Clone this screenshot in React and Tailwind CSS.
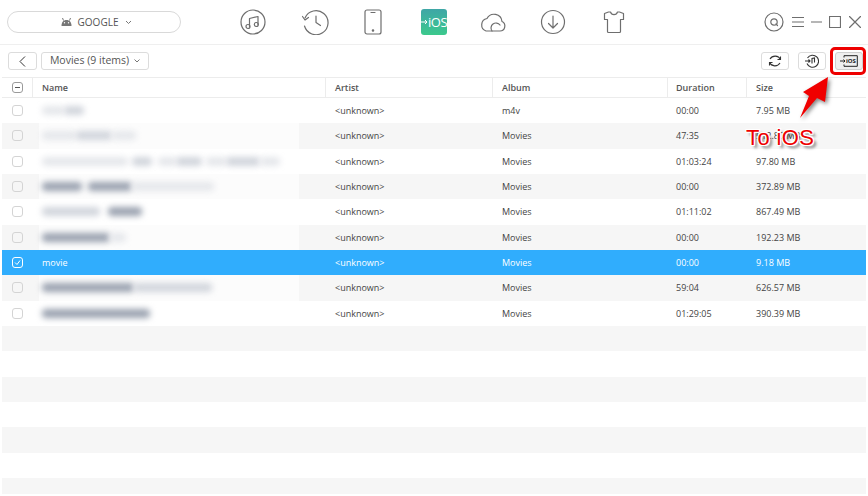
import React from "react";

const rows = [
  { a: "m4v", d: "00:00", s: "7.95 MB", blur: [[0, 22, "bg-gray-200"], [22, 20, "bg-gray-300"]] },
  { a: "Movies", d: "47:35", s: "512.80 MB", blur: [[0, 34, "bg-gray-200"], [34, 36, "bg-gray-300"], [70, 24, "bg-gray-200"]] },
  { a: "Movies", d: "01:03:24", s: "97.80 MB", blur: [[0, 86, "bg-gray-200"], [90, 20, "bg-gray-300"], [116, 18, "bg-gray-200"], [134, 26, "bg-gray-300"], [164, 20, "bg-gray-200"], [184, 34, "bg-gray-300"], [218, 20, "bg-gray-200"]] },
  { a: "Movies", d: "00:00", s: "372.89 MB", blur: [[0, 40, "bg-gray-400"], [46, 44, "bg-gray-400"], [90, 82, "bg-gray-200"]] },
  { a: "Movies", d: "01:11:02", s: "867.49 MB", blur: [[0, 58, "bg-gray-300"], [66, 34, "bg-gray-400"]] },
  { a: "Movies", d: "00:00", s: "192.23 MB", blur: [[0, 68, "bg-gray-400"], [68, 16, "bg-gray-200"]] },
  { a: "Movies", d: "00:00", s: "9.18 MB", name: "movie" },
  { a: "Movies", d: "59:04", s: "626.57 MB", blur: [[0, 92, "bg-gray-400"], [92, 78, "bg-gray-300"]] },
  { a: "Movies", d: "01:29:05", s: "390.39 MB", blur: [[0, 108, "bg-gray-400"]] },
];

const Box = ({ checked, minus }) => (
  <span className={`flex h-[11px] w-[11px] items-center justify-center rounded-[3px] border ${checked ? "border-white" : minus ? "border-[#9a9a9a]" : "border-[#d4d4d4]"}`}>
    {minus && <span className="h-px w-[5px] bg-[#555]" />}
    {checked && (
      <svg width="9" height="9" viewBox="0 0 9 9" fill="none" stroke="white" strokeWidth="1">
        <path d="M2 4.5 L4 6.5 L7 2.5" />
      </svg>
    )}
  </span>
);

const Ic = ({ w = 28, h = 28, children, vb }) => (
  <svg width={w} height={h} viewBox={vb || `0 0 ${w} ${h}`} fill="none" stroke="#6e6e6e" strokeWidth="1.2" strokeLinecap="round" strokeLinejoin="round" className="block">
    {children}
  </svg>
);

const ToolBtn = ({ children, active }) => (
  <div className={`relative flex h-[18px] w-[28px] items-center justify-center rounded-[3px] border ${active ? "border-[#cfcfcf] bg-[#efefef]" : "border-[#dcdcdc] bg-white"}`}>
    {children}
  </div>
);

export default function App() {
  return (
    <div className="relative h-[496px] w-[868px] overflow-hidden bg-white text-[9px] text-[#444]" style={{ fontFamily: '"Open Sans", sans-serif' }}>
      {/* top bar */}
      <div className="flex h-[45px] items-center border-b border-[#efefef]">
        <div className="ml-[7px] flex h-[22px] w-[174px] items-center justify-center rounded-full border border-[#d9d9d9] pl-[4px]">
          <svg width="13" height="10" viewBox="0 0 13 10" fill="#777" className="mr-[5px]">
            <path d="M1.5 9 C1.5 5 3.5 3 6.5 3 C9.5 3 11.5 5 11.5 9 Z" />
            <path d="M3.5 3.5 L2.5 1 M9.5 3.5 L10.5 1" stroke="#777" strokeWidth="1" />
            <circle cx="4.5" cy="5.7" r=".7" fill="#fff" />
            <circle cx="8.5" cy="5.7" r=".7" fill="#fff" />
          </svg>
          <span className="text-[10px] text-[#555]">GOOGLE</span>
          <svg width="7" height="5" viewBox="0 0 7 5" fill="none" stroke="#777" className="ml-[7px]">
            <path d="M1 1 L3.5 3.5 L6 1" />
          </svg>
        </div>

        <div className="ml-[59px]">
          <Ic w={26} h={26}>
            <circle cx="13" cy="13" r="12" />
            <path d="M9.5 17.5 V9.5 L18 7.5 V15.5" />
            <circle cx="8" cy="17.5" r="2" />
            <circle cx="16.3" cy="15.5" r="2" />
          </Ic>
        </div>
        <div className="ml-[35px]">
          <Ic w={28} h={26}>
            <path d="M4 9 A12 12 0 1 1 3.5 17" />
            <path d="M1.5 7.5 L4 11 L7.5 8.5" />
            <path d="M15 7 V13.5 L19.5 16.5" />
          </Ic>
        </div>
        <div className="ml-[35px]">
          <Ic w={18} h={26}>
            <rect x="1" y="1" width="16" height="24" rx="2" />
            <path d="M7 3.5 H11" />
            <circle cx="9" cy="21.5" r=".7" fill="#6e6e6e" />
          </Ic>
        </div>
        <div className="ml-[39px] flex h-[26px] w-[26px] items-center rounded-[3px] bg-gradient-to-b from-[#3fa6a6] to-[#3cc98c] text-[13px] leading-none text-white">
          <svg width="8" height="8" viewBox="0 0 8 8" fill="none" stroke="white" className="shrink-0">
            <path d="M0 4 H6 M4 2 L6 4 L4 6" />
          </svg>
          <span className="-ml-px tracking-[-0.5px]">iOS</span>
        </div>
        <div className="ml-[32px]">
          <Ic w={28} h={22}>
            <path d="M7 20 H21 A5 5 0 0 0 23 10.5 A8 8 0 0 0 8 7.5 A6.5 6.5 0 0 0 7 20 Z" />
            <path d="M13 20 A5 5 0 0 1 21 14" />
          </Ic>
        </div>
        <div className="ml-[33px]">
          <Ic w={26} h={26}>
            <circle cx="13" cy="13" r="11.5" />
            <path d="M13 7 V19 M8.5 14.5 L13 19 L17.5 14.5" />
          </Ic>
        </div>
        <div className="ml-[37px]">
          <Ic w={22} h={24}>
            <path d="M5.5 2 H7.5 C8.5 5.5 13.5 5.5 14.5 2 H16.5 L20.5 3.5 V9.5 H17.5 V21.5 C17.5 22 17 22.5 16.5 22.5 H5.5 C5 22.5 4.5 22 4.5 21.5 V9.5 H1.5 V3.5 Z" />
          </Ic>
        </div>

        <div className="ml-[139px]">
          <Ic w={20} h={20}>
            <circle cx="10" cy="10" r="9" />
            <circle cx="10" cy="10" r="3.2" />
            <path d="M12 12 L13.5 13.5" />
          </Ic>
        </div>
        <div className="ml-[8px]"><Ic w={12} h={12}><path d="M0.5 1.5 H11.5 M0.5 6 H11.5 M0.5 10.5 H11.5" /></Ic></div>
        <div className="ml-[7px]"><Ic w={11} h={12}><path d="M0.5 6 H10.5" /></Ic></div>
        <div className="ml-[7px]"><Ic w={12} h={12}><rect x=".5" y=".5" width="11" height="11" /></Ic></div>
        <div className="ml-[8px]"><Ic w={12} h={12}><path d="M.5 .5 L11.5 11.5 M11.5 .5 L.5 11.5" /></Ic></div>
      </div>

      {/* toolbar */}
      <div className="flex h-[32px] items-center pl-[8px] pr-[5px]">
        <div className="flex h-[18px] w-[29px] items-center justify-center rounded-[3px] border border-[#dcdcdc]">
          <svg width="7" height="11" viewBox="0 0 7 11" fill="none" stroke="#333">
            <path d="M6 .5 L1 5.5 L6 10.5" />
          </svg>
        </div>
        <div className="ml-[4px] flex h-[18px] w-[108px] items-center justify-center rounded-[3px] border border-[#dcdcdc] text-[10.5px] text-[#555]">
          Movies (9 items)
          <svg width="6" height="4" viewBox="0 0 6 4" fill="none" stroke="#777" className="ml-[5px]">
            <path d="M.5 .5 L3 3 L5.5 .5" />
          </svg>
        </div>
        <div className="ml-auto flex items-center gap-[9px]">
          <ToolBtn>
            <svg width="14" height="14" viewBox="0 0 14 14" fill="none" stroke="#333" strokeWidth="1.1">
              <path d="M12.5 5.5 A6 6 0 0 0 2 5 M1.5 8.5 A6 6 0 0 0 12 9" />
              <path d="M12.5 2.5 V5.5 H9.5 M1.5 11.5 V8.5 H4.5" />
            </svg>
          </ToolBtn>
          <ToolBtn>
            <svg width="14" height="14" viewBox="0 0 14 14" fill="none" stroke="#333" strokeWidth="1.1">
              <path d="M2.5 4 A6 6 0 1 1 2 9.5" />
              <path d="M0 7 H5 M3.5 5.5 L5 7 L3.5 8.5" />
              <path d="M7 9.5 V4.5 L9.5 4 V8.5" />
            </svg>
          </ToolBtn>
          <ToolBtn active>
            <svg width="18" height="12" viewBox="0 0 18 12" fill="none" stroke="#222">
              <path d="M0 6 H5 M3.5 4.5 L5 6 L3.5 7.5" />
              <path d="M4 2.5 V.7 H17.3 V11.3 H4 V9.5" />
            </svg>
            <span className="absolute left-[10px] top-[4px] text-[6px] font-bold leading-[8px] text-[#222]">iOS</span>
          </ToolBtn>
        </div>
      </div>

      {/* table */}
      <div className="mx-[2px]">
        <div className="flex h-[21px] items-center border-y border-[#ececec] font-semibold text-[#555]">
          <div className="flex h-full w-[31px] items-center justify-center border-r border-[#ececec]"><Box minus /></div>
          <div className="flex h-full w-[293px] items-center border-r border-[#ececec] pl-[9px]">Name</div>
          <div className="flex h-full w-[167px] items-center border-r border-[#ececec] pl-[9px]">Artist</div>
          <div className="flex h-full w-[175px] items-center border-r border-[#ececec] pl-[9px]">Album</div>
          <div className="flex h-full w-[79px] items-center border-r border-[#ececec] pl-[8px]">Duration</div>
          <div className="flex h-full flex-1 items-center pl-[9px]">Size</div>
        </div>

        <div className="grid h-[396px] auto-rows-[25.33px] overflow-hidden">
          {rows.map((r, i) => {
            const sel = !!r.name;
            return (
              <div key={i} className={`flex items-center ${sel ? "bg-[#30adfd] text-white" : i % 2 ? "bg-[#f6f6f6]" : "bg-white"}`}>
                <div className="flex w-[31px] justify-center"><Box checked={sel} /></div>
                {sel ? (
                  <div className="w-[293px] pl-[9px]">{r.name}</div>
                ) : (
                  <div className="relative flex h-full w-[293px]">
                    <div className="ml-[6px] h-full w-[260px] bg-white/70" />
                    {r.blur.map(([x, w, c], k) => (
                      <span key={k} className={`absolute top-[8px] h-[9px] rounded-sm blur-[3px] ${c}`} style={{ left: 9 + x, width: w }} />
                    ))}
                  </div>
                )}
                <div className="w-[167px] pl-[9px]">&lt;unknown&gt;</div>
                <div className="w-[175px] pl-[9px]">{r.a}</div>
                <div className="w-[79px] pl-[8px]">{r.d}</div>
                <div className="flex-1 pl-[9px]">{r.s}</div>
              </div>
            );
          })}
          {[0, 1, 2, 3, 4, 5, 6].map((i) => (
            <div key={i} className={i % 2 ? "bg-white" : "bg-[#f6f6f6]"} />
          ))}
        </div>
      </div>

      {/* annotation */}
      <div className="absolute left-[830px] top-[47px] h-[28px] w-[36px] rounded-[5px] border-[3px] border-[#ee0000]" />
      <svg className="absolute left-[795px] top-[75px] drop-shadow-[2px_2px_2px_rgba(0,0,0,0.5)]" width="40" height="50" viewBox="0 0 40 50">
        <path d="M33 2 L8 17 L14 21 L5 43 L22 23 L30 27 Z" fill="#f00000" />
      </svg>
      <div className="absolute left-[746px] top-[125px] text-[22px] leading-[26px] tracking-[0.4px] text-[#ee0000] [font-family:'Liberation_Sans',sans-serif] [text-shadow:1px_0_0_#fff,-1px_0_0_#fff,0_1px_0_#fff,0_-1px_0_#fff,1px_1px_0_#fff,-1px_-1px_0_#fff,1px_-1px_0_#fff,-1px_1px_0_#fff,3px_3px_3px_rgba(0,0,0,0.55)]">
        To iOS
      </div>
    </div>
  );
}
